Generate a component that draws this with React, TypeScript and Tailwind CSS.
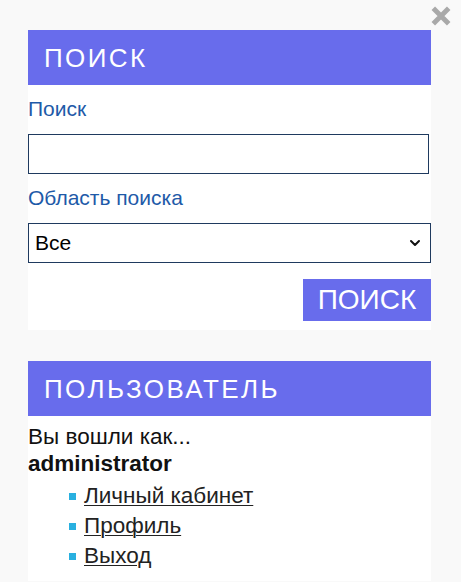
import React, { useState } from 'react';
import { ChevronDown } from 'lucide-react';

const font = { fontFamily: '"Liberation Sans", Arial, sans-serif' };

const PanelHeader: React.FC<{ title: string }> = ({ title }) => (
  <div className="h-[55px] bg-[#686cec] flex items-center px-4">
    <h2 className="text-[26px] leading-none tracking-[2.4px] text-white font-normal">{title}</h2>
  </div>
);

const App: React.FC = () => {
  const [query, setQuery] = useState('');
  const [scope, setScope] = useState('all');

  return (
    <div className="min-h-screen bg-[#f9f9f9] relative" style={font}>
      {/* close */}
      <button className="absolute right-[9px] top-[5px] w-[22px] h-[22px] flex items-center justify-center" title="Закрыть">
        <svg viewBox="0 0 20 20" width="22" height="22">
          <path d="M3 3 L17 17 M17 3 L3 17" stroke="#a9a9a9" strokeWidth="4.5" strokeLinecap="butt" />
        </svg>
      </button>

      <div className="pt-[30px] pl-[28px] w-[431px]">
        {/* Search panel */}
        <section className="bg-white pb-[9px]">
          <PanelHeader title="ПОИСК" />
          <form className="flex flex-col" onSubmit={(e) => e.preventDefault()}>
            <label htmlFor="q" className="mt-[12px] text-[21px] leading-[24px] text-[#1e5aa8]">Поиск</label>
            <input
              id="q"
              type="text"
              value={query}
              onChange={(e) => setQuery(e.target.value)}
              className="mt-[13px] w-[401px] h-[40px] border border-[#1f3a5f] bg-white px-2 text-[21px] outline-none"
            />
            <label htmlFor="scope" className="mt-[12px] text-[21px] leading-[24px] text-[#1e5aa8]">Область поиска</label>
            <div className="relative mt-[13px] w-[403px]">
              <select
                id="scope"
                value={scope}
                onChange={(e) => setScope(e.target.value)}
                className="appearance-none w-full h-[40px] border border-[#1f3a5f] bg-white pl-[6px] text-[21px] text-black outline-none"
              >
                <option value="all">Все</option>
              </select>
              <ChevronDown className="absolute right-[8px] top-[12px] pointer-events-none" size={16} strokeWidth={3} color="#111" />
            </div>
            <div className="flex justify-end mt-[16px] w-[403px]">
              <button type="submit" className="w-[128px] h-[42px] bg-[#686cec] text-white text-[28px] leading-none">ПОИСК</button>
            </div>
          </form>
        </section>

        {/* User panel */}
        <section className="bg-white mt-[31px] pb-[10px]">
          <PanelHeader title="ПОЛЬЗОВАТЕЛЬ" />
          <div className="pt-[7px] text-[22.5px] leading-[27px] text-[#111]">
            <p>Вы вошли как...</p>
            <p className="font-bold">administrator</p>
          </div>
          <ul className="mt-[4px] pl-[41px] text-[22.5px] leading-[30px]">
            {['Личный кабинет', 'Профиль', 'Выход'].map((item) => (
              <li key={item} className="flex items-center gap-[8px]">
                <span className="w-[7px] h-[7px] bg-[#29b0e0]" />
                <a href="#" className="underline text-[#222] decoration-1 underline-offset-2">{item}</a>
              </li>
            ))}
          </ul>
        </section>
      </div>
    </div>
  );
};

export default App;
